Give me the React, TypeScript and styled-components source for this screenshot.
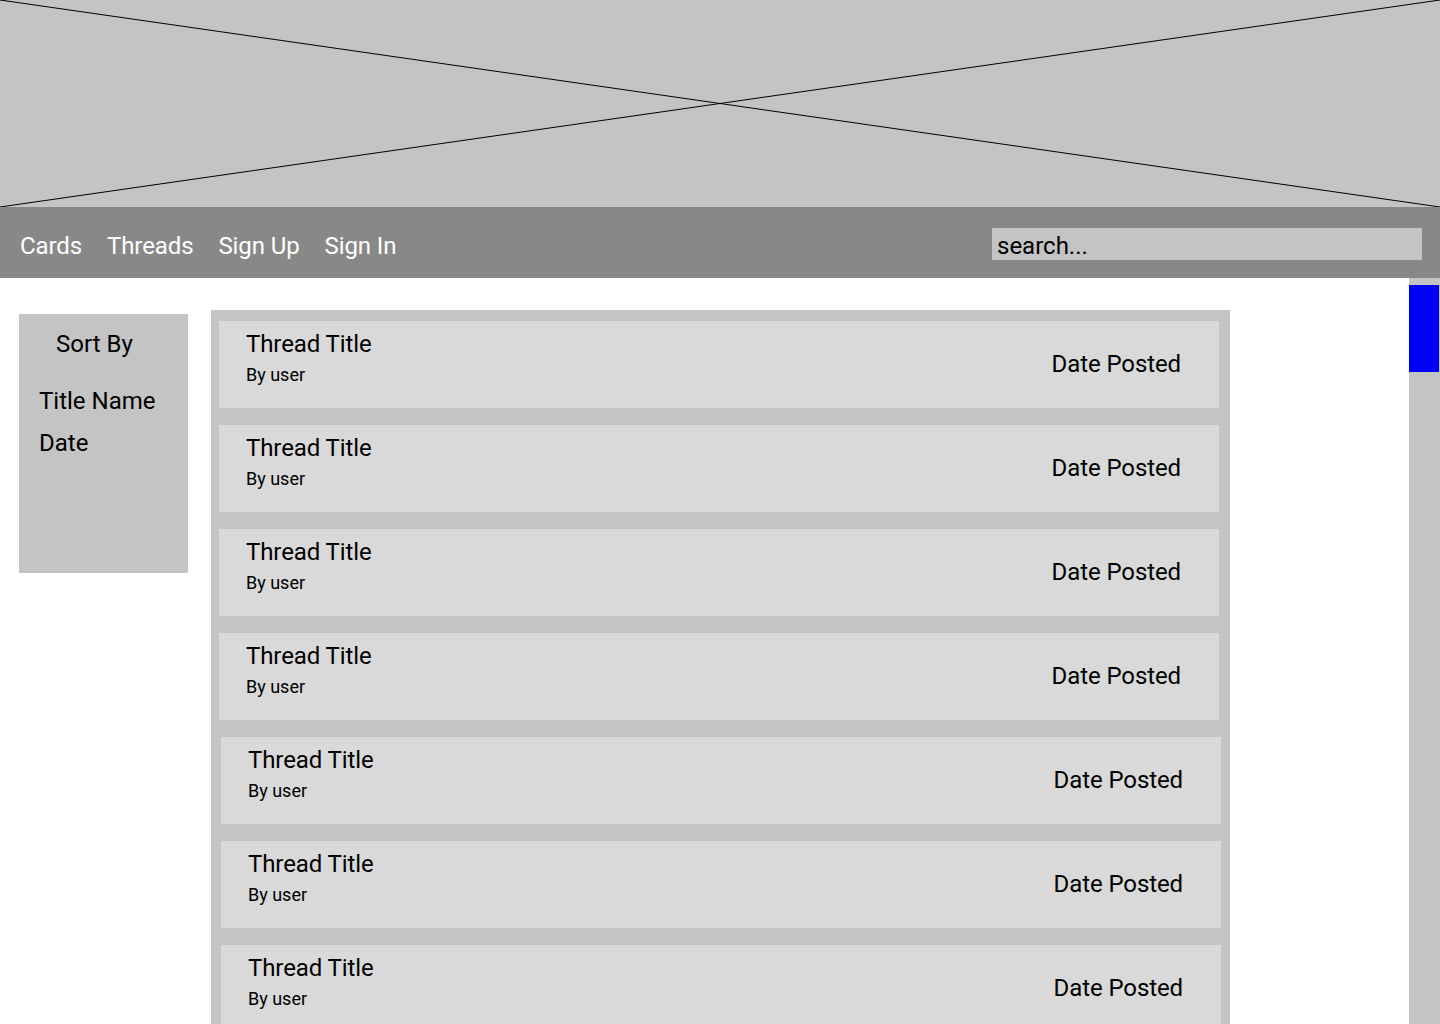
import React from 'react';
import styled, { createGlobalStyle } from 'styled-components';

const GlobalStyle = createGlobalStyle`
  html, body {
    margin: 0;
    padding: 0;
    overflow: hidden;
    background: #ffffff;
    font-family: Roboto, 'Liberation Sans', sans-serif;
  }
`;

const Page = styled.div`
  width: 1440px;
  height: 1024px;
  display: flex;
  flex-direction: column;
  overflow: hidden;
`;

const Banner = styled.div`
  height: 207px;
  flex-shrink: 0;
  background-color: #C4C4C4;

  svg {
    display: block;
    width: 100%;
    height: 100%;
  }
`;

const NavBar = styled.nav`
  height: 71px;
  flex-shrink: 0;
  background-color: #888888;
  display: flex;
  align-items: center;
  padding: 3px 18px 0 20px;
  box-sizing: border-box;
`;

const NavLinks = styled.div`
  display: flex;
  gap: 25px;
  flex: 1;
`;

const NavLink = styled.a`
  font-size: 24px;
  line-height: 28px;
  padding-top: 4px;
  letter-spacing: -0.1px;
  color: #ffffff;
  text-decoration: none;
  cursor: pointer;
`;

const SearchInput = styled.input`
  width: 430px;
  height: 32px;
  box-sizing: border-box;
  border: none;
  outline: none;
  margin-top: -1px;
  padding: 4px 5px 0;
  background-color: #C4C4C4;
  font-family: Roboto, 'Liberation Sans', sans-serif;
  font-size: 24px;
  color: #000000;

  &::placeholder {
    color: #000000;
    opacity: 1;
  }
`;

const Main = styled.div`
  flex: 1;
  display: flex;
  align-items: flex-start;
  overflow: hidden;
`;

const Sidebar = styled.aside`
  width: 169px;
  height: 259px;
  flex-shrink: 0;
  margin: 36px 0 0 19px;
  padding: 16px 0 0 20px;
  box-sizing: border-box;
  background-color: #C4C4C4;
  display: flex;
  flex-direction: column;
`;

const SortTitle = styled.div`
  font-size: 24px;
  line-height: 28px;
  color: #000000;
  padding-left: 17px;
  margin-bottom: 29px;
`;

const SortOption = styled.div<{ $gap?: number }>`
  font-size: 24px;
  line-height: 28px;
  color: #000000;
  margin-bottom: ${({ $gap }) => $gap ?? 0}px;
  cursor: pointer;
`;

const ThreadList = styled.section`
  width: 1019px;
  flex-shrink: 0;
  margin: 32px 0 0 23px;
  padding: 11px 11px 0 8px;
  box-sizing: border-box;
  background-color: #C4C4C4;
  display: flex;
  flex-direction: column;
  gap: 17px;
`;

const ThreadCard = styled.article<{ $nudge?: number }>`
  width: 1000px;
  height: 87px;
  flex-shrink: 0;
  margin-left: ${({ $nudge }) => $nudge ?? 0}px;
  padding: 0 38px 0 27px;
  box-sizing: border-box;
  background-color: #D9D9D9;
  display: flex;
  align-items: center;
  justify-content: space-between;
`;

const ThreadInfo = styled.div`
  align-self: flex-start;
  padding-top: 9px;
  display: flex;
  flex-direction: column;
  gap: 6px;
`;

const ThreadTitle = styled.div`
  font-size: 24px;
  line-height: 28px;
  letter-spacing: -0.1px;
  color: #000000;
`;

const ThreadAuthor = styled.div`
  font-size: 18px;
  line-height: 21px;
  color: #000000;
`;

const DatePosted = styled.div`
  font-size: 24px;
  line-height: 28px;
  letter-spacing: -0.1px;
  margin-top: -1px;
  color: #000000;
`;

const Spacer = styled.div`
  flex: 1;
`;

const ScrollTrack = styled.div`
  width: 31px;
  align-self: stretch;
  flex-shrink: 0;
  margin-top: -1px;
  padding-top: 8px;
  box-sizing: border-box;
  background-color: #C4C4C4;
`;

const ScrollThumb = styled.div`
  width: 30px;
  height: 87px;
  background-color: #0000FF;
`;

const threads = [0, 0, 0, 0, 2, 2, 2];

const App: React.FC = () => {
  return (
    <>
      <GlobalStyle />
      <Page>
        <Banner>
          <svg viewBox="0 0 1440 207" preserveAspectRatio="none">
            <line x1="0" y1="0" x2="1440" y2="207" stroke="#000" strokeWidth="1" />
            <line x1="1440" y1="0" x2="0" y2="207" stroke="#000" strokeWidth="1" />
          </svg>
        </Banner>
        <NavBar>
          <NavLinks>
            <NavLink>Cards</NavLink>
            <NavLink>Threads</NavLink>
            <NavLink>Sign Up</NavLink>
            <NavLink>Sign In</NavLink>
          </NavLinks>
          <SearchInput placeholder="search..." />
        </NavBar>
        <Main>
          <Sidebar>
            <SortTitle>Sort By</SortTitle>
            <SortOption $gap={14}>Title Name</SortOption>
            <SortOption>Date</SortOption>
          </Sidebar>
          <ThreadList>
            {threads.map((nudge, i) => (
              <ThreadCard key={i} $nudge={nudge}>
                <ThreadInfo>
                  <ThreadTitle>Thread Title</ThreadTitle>
                  <ThreadAuthor>By user</ThreadAuthor>
                </ThreadInfo>
                <DatePosted>Date Posted</DatePosted>
              </ThreadCard>
            ))}
          </ThreadList>
          <Spacer />
          <ScrollTrack>
            <ScrollThumb />
          </ScrollTrack>
        </Main>
      </Page>
    </>
  );
};

export default App;
